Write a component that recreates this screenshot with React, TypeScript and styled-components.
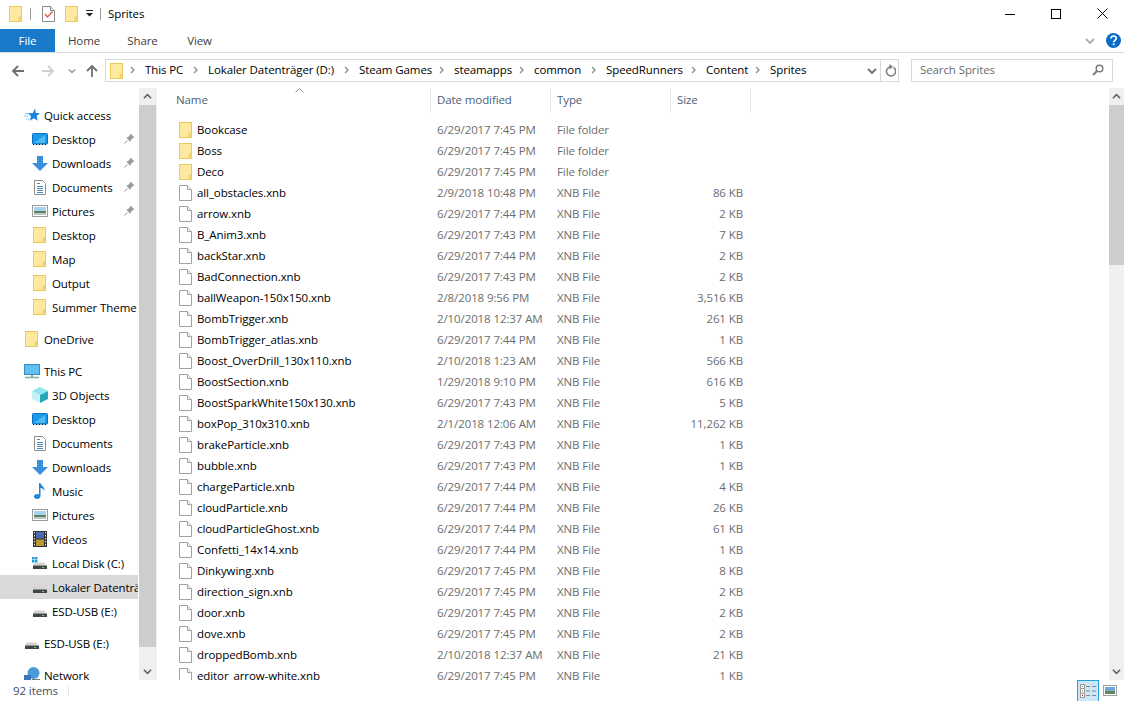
import React from 'react';
import styled, { createGlobalStyle } from 'styled-components';

const GlobalStyle = createGlobalStyle`
  html, body {
    margin: 0;
    padding: 0;
    background: #fff;
    font-family: "Open Sans", "Noto Sans", sans-serif;
    font-size: 11.5px;
    letter-spacing: -0.1px;
    color: #000;
    overflow: hidden;
  }
`;

// --- window shell ---
const Window = styled.div`
  width: 1124px;
  height: 701px;
  display: flex;
  flex-direction: column;
  overflow: hidden;
`;

const TitleBar = styled.div`
  height: 29px;
  flex: none;
  box-sizing: border-box;
  display: flex;
  align-items: center;
  padding: 0 0 2px 9px;
`;

const TitleIcon = styled.span<{ $gap?: number }>`
  display: flex;
  margin-right: ${p => p.$gap ?? 0}px;
`;

const TitleSep = styled.span<{ $gap: number }>`
  width: 1px;
  height: 12px;
  background: #9a9a9a;
  margin-right: ${p => p.$gap}px;
`;

const TitleText = styled.span`
  font-size: 11.5px;
`;

const WindowButtons = styled.div`
  margin-left: auto;
  margin-right: -1px;
  display: flex;
  height: 27px;
`;

const WindowButton = styled.div`
  width: 46px;
  display: flex;
  align-items: center;
  justify-content: center;
`;

const RibbonTabs = styled.div`
  height: 24px;
  flex: none;
  display: flex;
  align-items: stretch;
  border-bottom: 1px solid #dadbdc;
  box-sizing: border-box;
`;

const FileTab = styled.div`
  width: 55px;
  background: #1979ca;
  color: #fff;
  display: flex;
  align-items: center;
  justify-content: center;
`;

const RibbonTab = styled.div<{ $width: number }>`
  width: ${p => p.$width}px;
  display: flex;
  align-items: center;
  justify-content: center;
  color: #3c3c3c;
`;

const RibbonRight = styled.div`
  margin-left: auto;
  display: flex;
  align-items: center;
  gap: 11px;
  padding-right: 3px;
`;

// --- navigation row ---
const NavBar = styled.div`
  height: 35px;
  flex: none;
  display: flex;
  align-items: center;
  padding-left: 11px;
`;

const NavButton = styled.div<{ $width: number }>`
  width: ${p => p.$width}px;
  display: flex;
  align-items: center;
`;

const AddressBar = styled.div`
  width: 794px;
  height: 23px;
  box-sizing: border-box;
  border: 1px solid #d9d9d9;
  display: flex;
  align-items: center;
  padding-left: 4px;
`;

const Crumbs = styled.div`
  display: flex;
  align-items: center;
  flex: 1;
  padding: 0 0 2px 7px;
`;

const Crumb = styled.span<{ $width: number }>`
  width: ${p => p.$width}px;
  white-space: nowrap;
`;

const CrumbArrow = styled.span`
  width: 15px;
  display: flex;
`;

const AddressEnd = styled.div`
  width: 17px;
  height: 21px;
  border-left: 1px solid #d9d9d9;
  display: flex;
  align-items: center;
  justify-content: center;
`;

const AddressChevron = styled.span`
  width: 17px;
  display: flex;
  justify-content: center;
`;

const SearchBox = styled.div`
  width: 202px;
  height: 23px;
  margin-left: 12px;
  box-sizing: border-box;
  border: 1px solid #d9d9d9;
  display: flex;
  align-items: center;
  justify-content: space-between;
  padding: 0 8px 2px;
  color: #6d6d6d;
`;

// --- body ---
const Body = styled.div`
  flex: 1;
  min-height: 0;
  display: flex;
`;

const Sidebar = styled.div`
  width: 138px;
  margin-right: 1px;
  flex: none;
  padding-top: 15px;
  box-sizing: border-box;
  overflow: hidden;
`;

const SideRow = styled.div<{ $child?: boolean; $selected?: boolean; $spaced?: boolean }>`
  height: 24px;
  display: flex;
  align-items: center;
  position: relative;
  padding-left: ${p => (p.$child ? 31 : 23)}px;
  margin-top: ${p => (p.$spaced ? 8 : 0)}px;
  background: ${p => (p.$selected ? '#d9d9d9' : 'transparent')};
  white-space: nowrap;
  overflow: hidden;
`;

const SideIcon = styled.span`
  width: 17px;
  height: 16px;
  margin-right: 4px;
  flex: none;
  display: flex;
  align-items: center;
  justify-content: center;
`;

const PinSlot = styled.span`
  position: absolute;
  right: 3px;
  top: 6px;
  display: flex;
`;

const ScrollTrack = styled.div<{ $width: number }>`
  width: ${p => p.$width}px;
  flex: none;
  background: #f0f0f0;
  display: flex;
  flex-direction: column;
`;

const ScrollEnd = styled.div`
  height: 17px;
  flex: none;
  display: flex;
  align-items: center;
  justify-content: center;
`;

const ScrollThumb = styled.div<{ $height: number }>`
  height: ${p => p.$height}px;
  flex: none;
  background: #cdcdcd;
`;

const ScrollSpace = styled.div`
  flex: 1;
`;

const Content = styled.div`
  flex: 1;
  min-width: 0;
  display: flex;
  flex-direction: column;
  overflow: hidden;
  position: relative;
  border-left: 1px solid #f2f2f2;
`;

const columns = '274px 120px 120px 80px';

const HeaderRow = styled.div`
  height: 25px;
  flex: none;
  display: grid;
  grid-template-columns: ${columns};
  margin-bottom: 6px;
`;

const HeaderCell = styled.div<{ $pad: number }>`
  display: flex;
  align-items: center;
  padding-left: ${p => p.$pad}px;
  border-right: 1px solid #e5e5e5;
  color: #4c607a;
  padding-bottom: 2px;
`;

const SortCaret = styled.span`
  position: absolute;
  left: 138px;
  top: 0;
  display: flex;
`;

const FileRow = styled.div`
  height: 21px;
  flex: none;
  display: grid;
  grid-template-columns: ${columns};
  align-items: center;
`;

const NameCell = styled.div`
  display: flex;
  align-items: center;
  padding-left: 22px;
  white-space: nowrap;
`;

const FileIcon = styled.span`
  width: 18px;
  flex: none;
  display: flex;
`;

const MetaCell = styled.div`
  padding-left: 6px;
  color: #6d6d6d;
  white-space: nowrap;
`;

const SizeCell = styled.div`
  text-align: right;
  padding-right: 8px;
  color: #6d6d6d;
`;

const StatusBar = styled.div`
  height: 21px;
  flex: none;
  display: flex;
  align-items: center;
  padding-left: 13px;
  color: #3f4f66;
`;

const StatusSep = styled.span`
  width: 1px;
  height: 11px;
  margin-left: 10px;
  background: #e8e8e8;
`;

const ViewButtons = styled.div`
  margin-left: auto;
  display: flex;
  align-items: center;
  height: 21px;
  padding-right: 7px;
`;

const DetailsButton = styled.div`
  width: 22px;
  height: 22px;
  margin-right: 4px;
  box-sizing: border-box;
  border: 1px solid #26a0da;
  border-bottom: none;
  background: #cce8f6;
  display: flex;
  align-items: center;
  justify-content: center;
`;

// --- icons ---
const Folder = () => (
  <svg width="13" height="16" viewBox="0 0 13 16">
    <rect x="0.5" y="0.5" width="12" height="15" fill="#fee9a1" stroke="#ebc95a" />
    <rect x="10" y="11" width="2.5" height="4.5" fill="#f6d873" stroke="#ebc95a" strokeWidth="0.6" />
  </svg>
);

const FileDoc = () => (
  <svg width="13" height="16" viewBox="0 0 13 16">
    <path d="M.5.5h8l4 4v11H.5z" fill="#fff" stroke="#a0a0a0" />
    <path d="M8.5.5v4h4" fill="#f2f2f2" stroke="#a0a0a0" />
  </svg>
);

const TaskDoc = () => (
  <svg width="13" height="16" viewBox="0 0 13 16">
    <path d="M.5.5h8l4 4v11H.5z" fill="#fff" stroke="#8a8a8a" />
    <path d="M8.5.5v4h4" fill="#eee" stroke="#8a8a8a" />
    <path d="M3 8l2.5 3L10.5 5.5" fill="none" stroke="#e2603a" strokeWidth="1.4" />
  </svg>
);

const Chevron = ({ up, color = '#606060', size = 9 }: { up?: boolean; color?: string; size?: number }) => (
  <svg width={size} height={size} viewBox="0 0 10 10">
    <path d={up ? 'M1 7l4-4 4 4' : 'M1 3l4 4 4-4'} fill="none" stroke={color} strokeWidth="1.8" />
  </svg>
);

const Arrow = ({ dir, color }: { dir: 'left' | 'right' | 'up'; color: string }) => {
  const d = {
    left: 'M13 7H2M7 2L2 7l5 5',
    right: 'M1 7h11M7 2l5 5-5 5',
    up: 'M7 13V2M2 7l5-5 5 5',
  }[dir];
  return (
    <svg width="14" height="14" viewBox="0 0 14 14">
      <path d={d} fill="none" stroke={color} strokeWidth="1.8" />
    </svg>
  );
};

const CrumbGlyph = () => (
  <svg width="5" height="8" viewBox="0 0 5 8">
    <path d="M1 1l3 3-3 3" fill="none" stroke="#8a8a8a" strokeWidth="1.3" />
  </svg>
);

const Pin = () => (
  <svg width="11" height="11" viewBox="0 0 11 11">
    <path d="M6.5.5l4 4-1.5.5-2.5 2.5V9L2 4.5h1.5L6 2z" fill="#9a9a9a" />
    <path d="M3.5 7.5L.5 10.5" stroke="#9a9a9a" />
  </svg>
);

const QuickStar = () => (
  <svg width="16" height="16" viewBox="0 0 16 16">
    <path d="M1 6.500h4M0 9h4M2 12h3" stroke="#8ccaf2" />
    <path d="M11 1.500L11.800 6 16 6.300 12.700 9l1 4.700-3.900-2.500-4 2.500 1.200-4.700L3.800 6.300 8.800 6z" fill="#1a84dc" />
  </svg>
);

const DesktopIcon = () => (
  <svg width="16" height="12" viewBox="0 0 16 12">
    <rect x="0.5" y="0.5" width="15" height="10.5" rx="1" fill="#1a9ae8" stroke="#0b6fbd" />
    <path d="M2 10l11-8v8z" fill="#4dbcf2" />
    <path d="M1 11.500h14" stroke="#123" strokeDasharray="1 2" />
  </svg>
);

const DownloadIcon = () => (
  <svg width="16" height="15" viewBox="0 0 16 15">
    <path d="M5 0h6v7h5l-8 8-8-8h5z" fill="#3a8fdc" />
  </svg>
);

const DocumentsIcon = () => (
  <svg width="12" height="15" viewBox="0 0 12 15">
    <path d="M.5.5h8l3 3v11H.5z" fill="#fff" stroke="#8e8e8e" />
    <path d="M3 3.500h3M3 6.500h6M3 8.500h6M3 10.500h6M3 12.500h6" stroke="#4c86b8" />
  </svg>
);

const PicturesIcon = () => (
  <svg width="16" height="12" viewBox="0 0 16 12">
    <rect x="0.5" y="0.5" width="15" height="11" fill="#fff" stroke="#9a9a9a" />
    <rect x="2" y="2" width="12" height="4" fill="#a9cff2" />
    <rect x="2" y="6" width="12" height="2" fill="#5d8060" />
    <rect x="2" y="8" width="12" height="2" fill="#b9c8c4" />
  </svg>
);

const PcIcon = () => (
  <svg width="16" height="15" viewBox="0 0 16 15">
    <rect x="0.5" y="0.5" width="15" height="10" fill="#5ec1f2" stroke="#3c8dbd" />
    <path d="M1 13.500h14" stroke="#8aa" strokeWidth="1.5" />
    <path d="M7 11h2v2H7z" fill="#8aa" />
  </svg>
);

const CubeIcon = () => (
  <svg width="16" height="16" viewBox="0 0 16 16">
    <path d="M8 0l8 4-8 4-8-4z" fill="#8fe6ee" />
    <path d="M0 4l8 4v8l-8-4z" fill="#c4f2f5" />
    <path d="M16 4l-8 4v8l8-4z" fill="#22a8b8" />
  </svg>
);

const MusicIcon = () => (
  <svg width="12" height="16" viewBox="0 0 12 16">
    <path d="M5 0h1.500c.5 3 4.500 3.500 4 8-.8-2-2.500-3-4-3v8c0 1.800-1.500 3-3.500 3S0 15 0 13.500 1.500 11 3 11c.8 0 1.500.2 2 .5z" fill="#1e88dc" />
  </svg>
);

const VideoIcon = () => (
  <svg width="14" height="16" viewBox="0 0 14 16">
    <rect width="14" height="16" fill="#333" />
    <rect x="3" y="1" width="8" height="6.5" fill="#4a6ab0" />
    <rect x="3" y="8.5" width="8" height="6.5" fill="#b89a30" />
    <path d="M1.500 1v14M12.500 1v14" stroke="#ddd" strokeDasharray="1.5 1.5" />
  </svg>
);

const DiskIcon = ({ windows }: { windows?: boolean }) => (
  <svg width="16" height="16" viewBox="0 0 16 16">
    {windows && <path d="M0 2h2.500v2.500H0zM3 2h2.500v2.500H3zM0 5h2.500v2.500H0zM3 5h2.500v2.500H3z" fill="#1ba1e2" />}
    <path d="M2.500 7.500h10l1.500 3H1z" fill="#d4d4d4" />
    <rect x="1" y="10.5" width="14" height="3.5" fill="#444" />
    <rect x="10" y="12" width="2" height="1" fill="#4ee06a" />
  </svg>
);

const NetworkIcon = () => (
  <svg width="16" height="16" viewBox="0 0 16 16">
    <circle cx="9.5" cy="6" r="6" fill="#4a9bd8" />
    <rect x="0" y="8" width="7" height="6" fill="#3a78b8" />
    <path d="M8 13h8" stroke="#777" strokeWidth="2" />
  </svg>
);

const HelpBadge = () => (
  <svg width="15" height="15" viewBox="0 0 15 15">
    <circle cx="7.5" cy="7.5" r="7.5" fill="#0a6cc8" />
    <path d="M5 5.500C5 3.800 6.300 3 7.600 3 9 3 10.200 3.900 10.200 5.300c0 2-2.500 2-2.500 3.900" fill="none" stroke="#fff" strokeWidth="1.7" />
    <rect x="6.800" y="10.400" width="1.800" height="1.800" fill="#fff" />
  </svg>
);

const RefreshIcon = () => (
  <svg width="12" height="13" viewBox="0 0 12 13">
    <path d="M9.600 3.500A4.600 4.600 0 1 1 6 2.900" fill="none" stroke="#7c7c7c" strokeWidth="1.5" />
    <path d="M5.500 0v5.500L9 2.700z" fill="#7c7c7c" />
  </svg>
);

const SearchGlyph = () => (
  <svg width="12" height="12" viewBox="0 0 12 12">
    <circle cx="7.5" cy="4.5" r="3.3" fill="none" stroke="#7a7a7a" strokeWidth="1.5" />
    <path d="M5 7l-4 4" stroke="#7a7a7a" strokeWidth="2" />
  </svg>
);

const DetailsGlyph = () => (
  <svg width="16" height="14" viewBox="0 0 16 14">
    <rect x="0.5" y="0.5" width="4" height="13" fill="#fff" stroke="#999" />
    <path d="M1 4.500h3M1 9h3" stroke="#999" />
    <rect x="2" y="2" width="1" height="1" fill="#777" />
    <rect x="2" y="6" width="1" height="1" fill="#777" />
    <rect x="2" y="10.5" width="1" height="1.5" fill="#c0392b" />
    <path d="M6 2.500h4M12 2.500h4M6 7h4M12 7h4M6 11.500h4M12 11.500h4" stroke="#888" />
  </svg>
);

const LargeGlyph = () => (
  <svg width="14" height="11" viewBox="0 0 14 11">
    <rect x="0.5" y="0.5" width="13" height="10" fill="#fff" stroke="#a0a0a0" />
    <rect x="2" y="2" width="10" height="3.5" fill="#6aa8e0" />
    <rect x="2" y="5.5" width="10" height="3.5" fill="#5f8468" />
  </svg>
);

// --- data ---
type Side = { label: string; icon: React.ReactNode; child?: boolean; pin?: boolean; selected?: boolean; spaced?: boolean };

const sideItems: Side[] = [
  { label: 'Quick access', icon: <QuickStar /> },
  { label: 'Desktop', icon: <DesktopIcon />, child: true, pin: true },
  { label: 'Downloads', icon: <DownloadIcon />, child: true, pin: true },
  { label: 'Documents', icon: <DocumentsIcon />, child: true, pin: true },
  { label: 'Pictures', icon: <PicturesIcon />, child: true, pin: true },
  { label: 'Desktop', icon: <Folder />, child: true },
  { label: 'Map', icon: <Folder />, child: true },
  { label: 'Output', icon: <Folder />, child: true },
  { label: 'Summer Theme', icon: <Folder />, child: true },
  { label: 'OneDrive', icon: <Folder />, spaced: true },
  { label: 'This PC', icon: <PcIcon />, spaced: true },
  { label: '3D Objects', icon: <CubeIcon />, child: true },
  { label: 'Desktop', icon: <DesktopIcon />, child: true },
  { label: 'Documents', icon: <DocumentsIcon />, child: true },
  { label: 'Downloads', icon: <DownloadIcon />, child: true },
  { label: 'Music', icon: <MusicIcon />, child: true },
  { label: 'Pictures', icon: <PicturesIcon />, child: true },
  { label: 'Videos', icon: <VideoIcon />, child: true },
  { label: 'Local Disk (C:)', icon: <DiskIcon windows />, child: true },
  { label: 'Lokaler Datenträger (D:)', icon: <DiskIcon />, child: true, selected: true },
  { label: 'ESD-USB (E:)', icon: <DiskIcon />, child: true },
  { label: 'ESD-USB (E:)', icon: <DiskIcon />, spaced: true },
  { label: 'Network', icon: <NetworkIcon />, spaced: true },
];

const crumbs: [string, number][] = [
  ['This PC', 48],
  ['Lokaler Datenträger (D:)', 136],
  ['Steam Games', 80],
  ['steamapps', 65],
  ['common', 57],
  ['SpeedRunners', 85],
  ['Content', 49],
  ['Sprites', 50],
];

const folders = ['Bookcase', 'Boss', 'Deco'];

const J = '6/29/2017';
const files: [string, string, string][] = [
  ['all_obstacles.xnb', '2/9/2018 10:48 PM', '86 KB'],
  ['arrow.xnb', `${J} 7:44 PM`, '2 KB'],
  ['B_Anim3.xnb', `${J} 7:43 PM`, '7 KB'],
  ['backStar.xnb', `${J} 7:44 PM`, '2 KB'],
  ['BadConnection.xnb', `${J} 7:43 PM`, '2 KB'],
  ['ballWeapon-150x150.xnb', '2/8/2018 9:56 PM', '3,516 KB'],
  ['BombTrigger.xnb', '2/10/2018 12:37 AM', '261 KB'],
  ['BombTrigger_atlas.xnb', `${J} 7:44 PM`, '1 KB'],
  ['Boost_OverDrill_130x110.xnb', '2/10/2018 1:23 AM', '566 KB'],
  ['BoostSection.xnb', '1/29/2018 9:10 PM', '616 KB'],
  ['BoostSparkWhite150x130.xnb', `${J} 7:43 PM`, '5 KB'],
  ['boxPop_310x310.xnb', '2/1/2018 12:06 AM', '11,262 KB'],
  ['brakeParticle.xnb', `${J} 7:43 PM`, '1 KB'],
  ['bubble.xnb', `${J} 7:43 PM`, '1 KB'],
  ['chargeParticle.xnb', `${J} 7:44 PM`, '4 KB'],
  ['cloudParticle.xnb', `${J} 7:44 PM`, '26 KB'],
  ['cloudParticleGhost.xnb', `${J} 7:44 PM`, '61 KB'],
  ['Confetti_14x14.xnb', `${J} 7:44 PM`, '1 KB'],
  ['Dinkywing.xnb', `${J} 7:45 PM`, '8 KB'],
  ['direction_sign.xnb', `${J} 7:45 PM`, '2 KB'],
  ['door.xnb', `${J} 7:45 PM`, '2 KB'],
  ['dove.xnb', `${J} 7:45 PM`, '2 KB'],
  ['droppedBomb.xnb', '2/10/2018 12:37 AM', '21 KB'],
  ['editor_arrow-white.xnb', `${J} 7:45 PM`, '1 KB'],
];

const App: React.FC = () => (
  <Window>
    <GlobalStyle />
    <TitleBar>
      <TitleIcon $gap={8}><Folder /></TitleIcon>
      <TitleSep $gap={11} />
      <TitleIcon $gap={10}><TaskDoc /></TitleIcon>
      <TitleIcon $gap={8}><Folder /></TitleIcon>
      <TitleIcon $gap={7}>
        <svg width="7" height="7" viewBox="0 0 7 7">
          <path d="M0 0h7v1H0zM0 3h7L3.5 6.5z" fill="#222" />
        </svg>
      </TitleIcon>
      <TitleSep $gap={7} />
      <TitleText>Sprites</TitleText>
      <WindowButtons>
        <WindowButton>
          <svg width="10" height="10" viewBox="0 0 10 10"><path d="M0 5.5h10" stroke="#000" /></svg>
        </WindowButton>
        <WindowButton>
          <svg width="10" height="10" viewBox="0 0 10 10"><rect x="0.5" y="0.5" width="9" height="9" fill="none" stroke="#000" /></svg>
        </WindowButton>
        <WindowButton>
          <svg width="11" height="11" viewBox="0 0 11 11"><path d="M.5.5l10 10M10.5.5l-10 10" stroke="#000" /></svg>
        </WindowButton>
      </WindowButtons>
    </TitleBar>

    <RibbonTabs>
      <FileTab>File</FileTab>
      <RibbonTab $width={58}>Home</RibbonTab>
      <RibbonTab $width={59}>Share</RibbonTab>
      <RibbonTab $width={55}>View</RibbonTab>
      <RibbonRight>
        <Chevron color="#aaa" size={10} />
        <HelpBadge />
      </RibbonRight>
    </RibbonTabs>

    <NavBar>
      <NavButton $width={30}><Arrow dir="left" color="#6f6f6f" /></NavButton>
      <NavButton $width={27}><Arrow dir="right" color="#d0d0d0" /></NavButton>
      <NavButton $width={17}><Chevron color="#9a9a9a" size={8} /></NavButton>
      <NavButton $width={20}><Arrow dir="up" color="#6f6f6f" /></NavButton>
      <AddressBar>
        <Folder />
        <Crumbs>
          {crumbs.map(([label, width]) => (
            <React.Fragment key={label}>
              <CrumbArrow><CrumbGlyph /></CrumbArrow>
              <Crumb $width={width}>{label}</Crumb>
            </React.Fragment>
          ))}
        </Crumbs>
        <AddressChevron><Chevron color="#6f6f6f" size={10} /></AddressChevron>
        <AddressEnd><RefreshIcon /></AddressEnd>
      </AddressBar>
      <SearchBox>
        <span>Search Sprites</span>
        <SearchGlyph />
      </SearchBox>
    </NavBar>

    <Body>
      <Sidebar>
        {sideItems.map((item, i) => (
          <SideRow key={i} $child={item.child} $selected={item.selected} $spaced={item.spaced}>
            <SideIcon>{item.icon}</SideIcon>
            {item.label}
            {item.pin && <PinSlot><Pin /></PinSlot>}
          </SideRow>
        ))}
      </Sidebar>
      <ScrollTrack $width={17}>
        <ScrollEnd><Chevron up /></ScrollEnd>
        <ScrollThumb $height={542} />
        <ScrollSpace />
        <ScrollEnd><Chevron /></ScrollEnd>
      </ScrollTrack>

      <Content>
        <HeaderRow>
          <HeaderCell $pad={19}>Name</HeaderCell>
          <HeaderCell $pad={6}>Date modified</HeaderCell>
          <HeaderCell $pad={6}>Type</HeaderCell>
          <HeaderCell $pad={6}>Size</HeaderCell>
        </HeaderRow>
        <SortCaret>
          <svg width="9" height="5" viewBox="0 0 9 5">
            <path d="M.5 4.500l4-4 4 4" fill="none" stroke="#9a9a9a" />
          </svg>
        </SortCaret>
        {folders.map(name => (
          <FileRow key={name}>
            <NameCell><FileIcon><Folder /></FileIcon>{name}</NameCell>
            <MetaCell>{J} 7:45 PM</MetaCell>
            <MetaCell>File folder</MetaCell>
            <SizeCell />
          </FileRow>
        ))}
        {files.map(([name, date, size]) => (
          <FileRow key={name}>
            <NameCell><FileIcon><FileDoc /></FileIcon>{name}</NameCell>
            <MetaCell>{date}</MetaCell>
            <MetaCell>XNB File</MetaCell>
            <SizeCell>{size}</SizeCell>
          </FileRow>
        ))}
      </Content>

      <ScrollTrack $width={15}>
        <ScrollEnd><Chevron up /></ScrollEnd>
        <ScrollThumb $height={160} />
        <ScrollSpace />
        <ScrollEnd><Chevron /></ScrollEnd>
      </ScrollTrack>
    </Body>

    <StatusBar>
      92 items
      <StatusSep />
      <ViewButtons>
        <DetailsButton><DetailsGlyph /></DetailsButton>
        <LargeGlyph />
      </ViewButtons>
    </StatusBar>
  </Window>
);

export default App;
